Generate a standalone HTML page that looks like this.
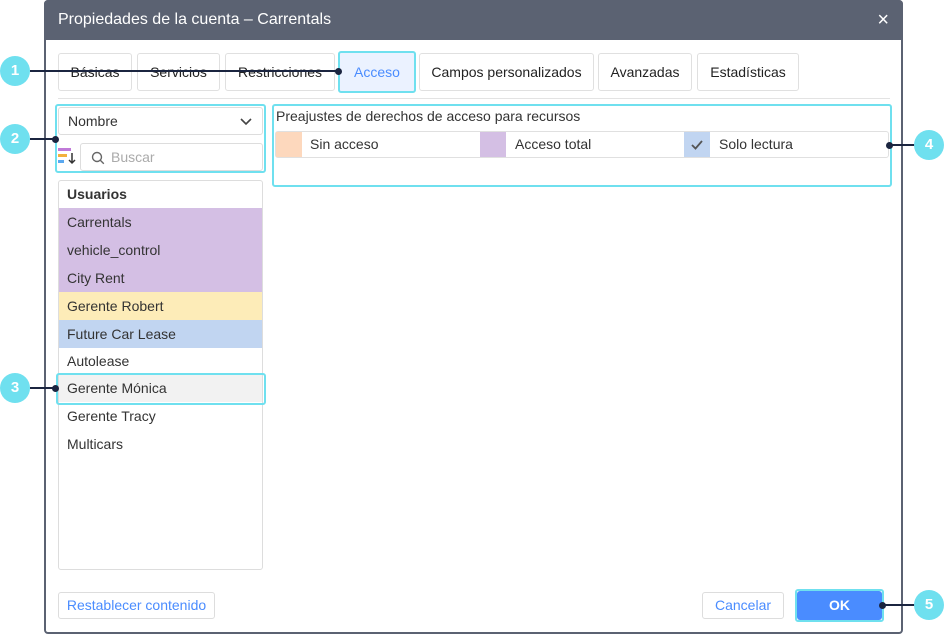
<!DOCTYPE html>
<html><head><meta charset="utf-8"><style>
*{box-sizing:border-box;margin:0;padding:0}
body{width:944px;height:634px;background:#fff;font-family:"Liberation Sans",sans-serif;position:relative;overflow:hidden;color:#333}
.a{position:absolute}
.dlg{left:44px;top:0;width:859px;height:634px;border:2px solid #5b6272;border-radius:4px;background:#fff}
.hdr{left:44px;top:0;width:859px;height:40px;background:#5b6272;border-radius:4px 4px 0 0;color:#fff;font-size:16px;line-height:40px;padding-left:14px}
.tab{top:53px;height:38px;border:1px solid #e0e0e0;border-radius:3px;font-size:14px;line-height:36px;text-align:center;color:#222}
.cy{border:2px solid #6fe0ef;border-radius:3px}
.row{left:59px;width:203px;height:28px;font-size:14px;line-height:28px;padding-left:8px;color:#333}
.btn{border:1px solid #ddd;border-radius:3px;font-size:14px;text-align:center;line-height:25px;color:#4a8cff}
.c{width:30px;height:30px;border-radius:50%;background:#6fe0ef;color:#fff;font-weight:bold;font-size:15px;text-align:center;line-height:30px}
.ln{height:2px;background:#1b2540}
.dot{width:7px;height:7px;border-radius:50%;background:#1b2540}
</style></head><body>
<div class="a dlg"></div>
<div class="a hdr">Propiedades de la cuenta – Carrentals<span class="a" style="right:14px;top:0;font-size:20px">×</span></div>

<div class="a tab" style="left:58px;width:74px">Básicas</div>
<div class="a tab" style="left:137px;width:83px">Servicios</div>
<div class="a tab" style="left:225px;width:110px">Restricciones</div>
<div class="a tab cy" style="left:338px;top:51px;height:42px;width:78px;background:#ebf2ff;color:#4a8cff;line-height:38px">Acceso</div>
<div class="a tab" style="left:419px;width:175px">Campos personalizados</div>
<div class="a tab" style="left:598px;width:94px">Avanzadas</div>
<div class="a tab" style="left:697px;width:102px">Estadísticas</div>
<div class="a" style="left:58px;top:98px;width:832px;height:1px;background:#e3e3e3"></div>

<div class="a cy" style="left:55px;top:104px;width:211px;height:69px"></div>
<div class="a" style="left:58px;top:107px;width:205px;height:28px;border:1px solid #ddd;border-radius:3px;font-size:14px;line-height:26px;padding-left:9px">Nombre<span class="a" style="right:10px;top:0">
<svg width="12" height="26" viewBox="0 0 12 26"><path d="M1 11l5 5 5-5" fill="none" stroke="#444" stroke-width="1.6"/></svg></span></div>
<svg class="a" style="left:57px;top:147px" width="20" height="18"><rect x="1" y="1" width="13" height="3" fill="#c07ad8"/><rect x="1" y="7" width="9" height="3" fill="#f2b13c"/><rect x="1" y="13" width="6" height="3" fill="#5aa8f0"/><path d="M15 6v10M12 13l3 3 3-3" fill="none" stroke="#333" stroke-width="1.5"/></svg>
<div class="a" style="left:80px;top:143px;width:183px;height:28px;border:1px solid #ddd;border-radius:3px;font-size:14px;line-height:26px;padding-left:30px;color:#aaa">Buscar
<svg class="a" style="left:10px;top:7px" width="14" height="14"><circle cx="6" cy="6" r="4.5" fill="none" stroke="#666" stroke-width="1.4"/><path d="M9.3 9.3l3.5 3.5" stroke="#666" stroke-width="1.4"/></svg></div>

<div class="a" style="left:58px;top:180px;width:205px;height:390px;border:1px solid #ddd;border-radius:3px"></div>
<div class="a row" style="top:180px;font-weight:bold">Usuarios</div>
<div class="a row" style="top:208px;background:#d4bfe4">Carrentals</div>
<div class="a row" style="top:236px;background:#d4bfe4">vehicle_control</div>
<div class="a row" style="top:264px;background:#d4bfe4">City Rent</div>
<div class="a row" style="top:292px;background:#fdecb8">Gerente Robert</div>
<div class="a row" style="top:320px;background:#c1d5f1">Future Car Lease</div>
<div class="a row" style="top:347px">Autolease</div>
<div class="a row" style="top:374px;background:#f2f2f2">Gerente Mónica</div>
<div class="a cy" style="left:56px;top:373px;width:210px;height:32px"></div>
<div class="a row" style="top:402px">Gerente Tracy</div>
<div class="a row" style="top:430px">Multicars</div>

<div class="a cy" style="left:272px;top:104px;width:620px;height:83px"></div>
<div class="a" style="left:276px;top:108px;font-size:14px;color:#333">Preajustes de derechos de acceso para recursos</div>
<div class="a" style="left:275px;top:131px;width:614px;height:27px;border:1px solid #e0e0e0;border-radius:3px"></div>
<div class="a" style="left:276px;top:132px;width:26px;height:25px;background:#fdd8bd"></div>
<div class="a" style="left:310px;top:136px;font-size:14px">Sin acceso</div>
<div class="a" style="left:480px;top:132px;width:26px;height:25px;background:#d4bfe4"></div>
<div class="a" style="left:515px;top:136px;font-size:14px">Acceso total</div>
<div class="a" style="left:684px;top:132px;width:26px;height:25px;background:#c1d5f1"></div>
<svg class="a" style="left:690px;top:138px" width="14" height="14"><path d="M2 7l3.5 3.5L12 3" fill="none" stroke="#555" stroke-width="1.8"/></svg>
<div class="a" style="left:719px;top:136px;font-size:14px">Solo lectura</div>

<div class="a btn" style="left:58px;top:592px;width:157px;height:27px">Restablecer contenido</div>
<div class="a btn" style="left:702px;top:592px;width:82px;height:27px">Cancelar</div>
<div class="a cy" style="left:795px;top:589px;width:89px;height:33px"></div>
<div class="a btn" style="left:797px;top:591px;width:85px;height:29px;background:#4a8cff;color:#fff;border:none;line-height:29px;font-weight:bold">OK</div>

<div class="a ln" style="left:30px;top:70px;width:310px"></div><div class="a dot" style="left:335px;top:68px"></div>
<div class="a c" style="left:0;top:56px">1</div>
<div class="a ln" style="left:30px;top:138px;width:26px"></div><div class="a dot" style="left:52px;top:136px"></div>
<div class="a c" style="left:0;top:124px">2</div>
<div class="a ln" style="left:30px;top:387px;width:26px"></div><div class="a dot" style="left:52px;top:385px"></div>
<div class="a c" style="left:0;top:373px">3</div>
<div class="a ln" style="left:890px;top:144px;width:26px"></div><div class="a dot" style="left:886px;top:142px"></div>
<div class="a c" style="left:914px;top:130px">4</div>
<div class="a ln" style="left:882px;top:604px;width:34px"></div><div class="a dot" style="left:879px;top:602px"></div>
<div class="a c" style="left:914px;top:590px">5</div>
</body></html>
